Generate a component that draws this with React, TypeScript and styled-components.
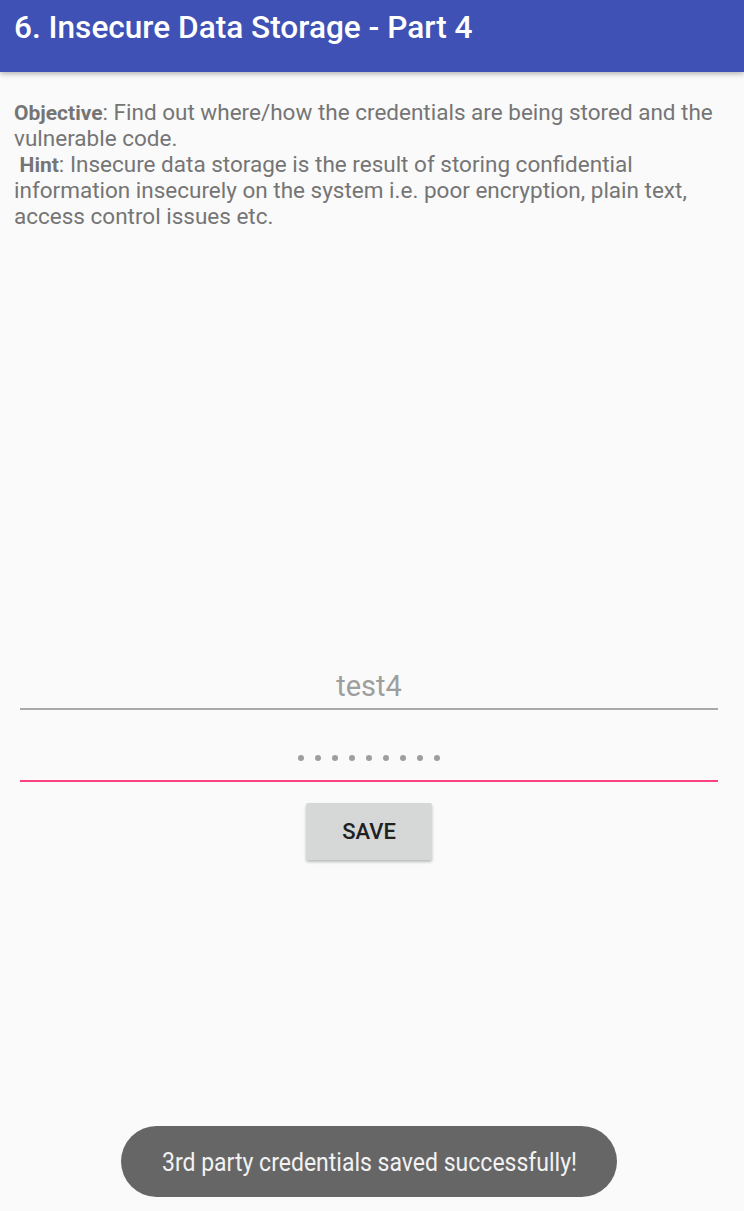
import React from "react";
import styled, { createGlobalStyle } from "styled-components";

const Global = createGlobalStyle`
  html, body { margin: 0; padding: 0; background: #fafafa; }
  body { font-family: Roboto, "Noto Sans", "Liberation Sans", sans-serif; }
  * { box-sizing: border-box; }
`;

const Screen = styled.div`
  width: 744px;
  height: 1211px;
  display: flex;
  flex-direction: column;
  background: #fafafa;
  overflow: hidden;
`;

const AppBar = styled.header`
  height: 72px;
  flex: none;
  background: #3f51b5;
  padding: 8px 14px 0;
  box-shadow: 0 2px 5px rgba(0, 0, 0, 0.28);
  position: relative;
  z-index: 1;
`;

const Title = styled.h1`
  margin: 0;
  font-size: 31.6px;
  line-height: 40px;
  font-weight: 500;
  color: #ffffff;
`;

const Description = styled.p`
  margin: 28px 14px 0;
  font-size: 22.5px;
  line-height: 25.4px;
  color: #757575;
`;

const Strong = styled.b`
  font-weight: 700;
  font-size: 21px;
`;

const Form = styled.div`
  display: flex;
  flex-direction: column;
  align-items: center;
  margin-top: 435px;
`;

const Field = styled.div<{ $accent?: boolean }>`
  align-self: stretch;
  margin: 0 26px 0 20px;
  height: ${(p) => (p.$accent ? "72px" : "46px")};
  display: flex;
  align-items: center;
  justify-content: center;
  padding-top: ${(p) => (p.$accent ? "26px" : "0")};
  border-bottom: 2px solid ${(p) => (p.$accent ? "#ff4081" : "#a9a9a9")};
  font-size: 29px;
  color: #9e9e9e;
`;

const Dots = styled.div`
  display: flex;
  gap: 10.9px;
`;

const Dot = styled.span`
  width: 6px;
  height: 6px;
  border-radius: 50%;
  background: #9e9e9e;
`;

const SaveButton = styled.button`
  margin-top: 21px;
  margin-left: -6px;
  width: 126px;
  height: 57px;
  border: none;
  border-radius: 2px;
  background: #d6d7d7;
  box-shadow: 0 2px 3px rgba(0, 0, 0, 0.25);
  font-family: Roboto, "Noto Sans", sans-serif;
  font-size: 22px;
  font-weight: 500;
  color: #212121;
  padding: 0;
`;

const Toast = styled.div`
  margin: auto 0 14px 121px;
  width: 496px;
  height: 71px;
  border-radius: 36px;
  background: #666666;
  display: flex;
  align-items: center;
  justify-content: center;
`;

const ToastText = styled.span`
  display: inline-block;
  white-space: nowrap;
  font-size: 26px;
  color: #f2f2f2;
  transform: scaleX(0.885);
`;

export default function App() {
  return (
    <>
      <Global />
      <Screen>
        <AppBar>
          <Title>6. Insecure Data Storage - Part 4</Title>
        </AppBar>
        <Description>
          <Strong>Objective</Strong>: Find out where/how the credentials are being stored and the vulnerable code.
          <br />
          &nbsp;<Strong>Hint</Strong>: Insecure data storage is the result of storing confidential information
          insecurely on the system i.e. poor encryption, plain text, access control issues etc.
        </Description>
        <Form>
          <Field>test4</Field>
          <Field $accent>
            <Dots>
              {Array.from({ length: 9 }).map((_, i) => (
                <Dot key={i} />
              ))}
            </Dots>
          </Field>
          <SaveButton>SAVE</SaveButton>
        </Form>
        <Toast>
          <ToastText>3rd party credentials saved successfully!</ToastText>
        </Toast>
      </Screen>
    </>
  );
}
